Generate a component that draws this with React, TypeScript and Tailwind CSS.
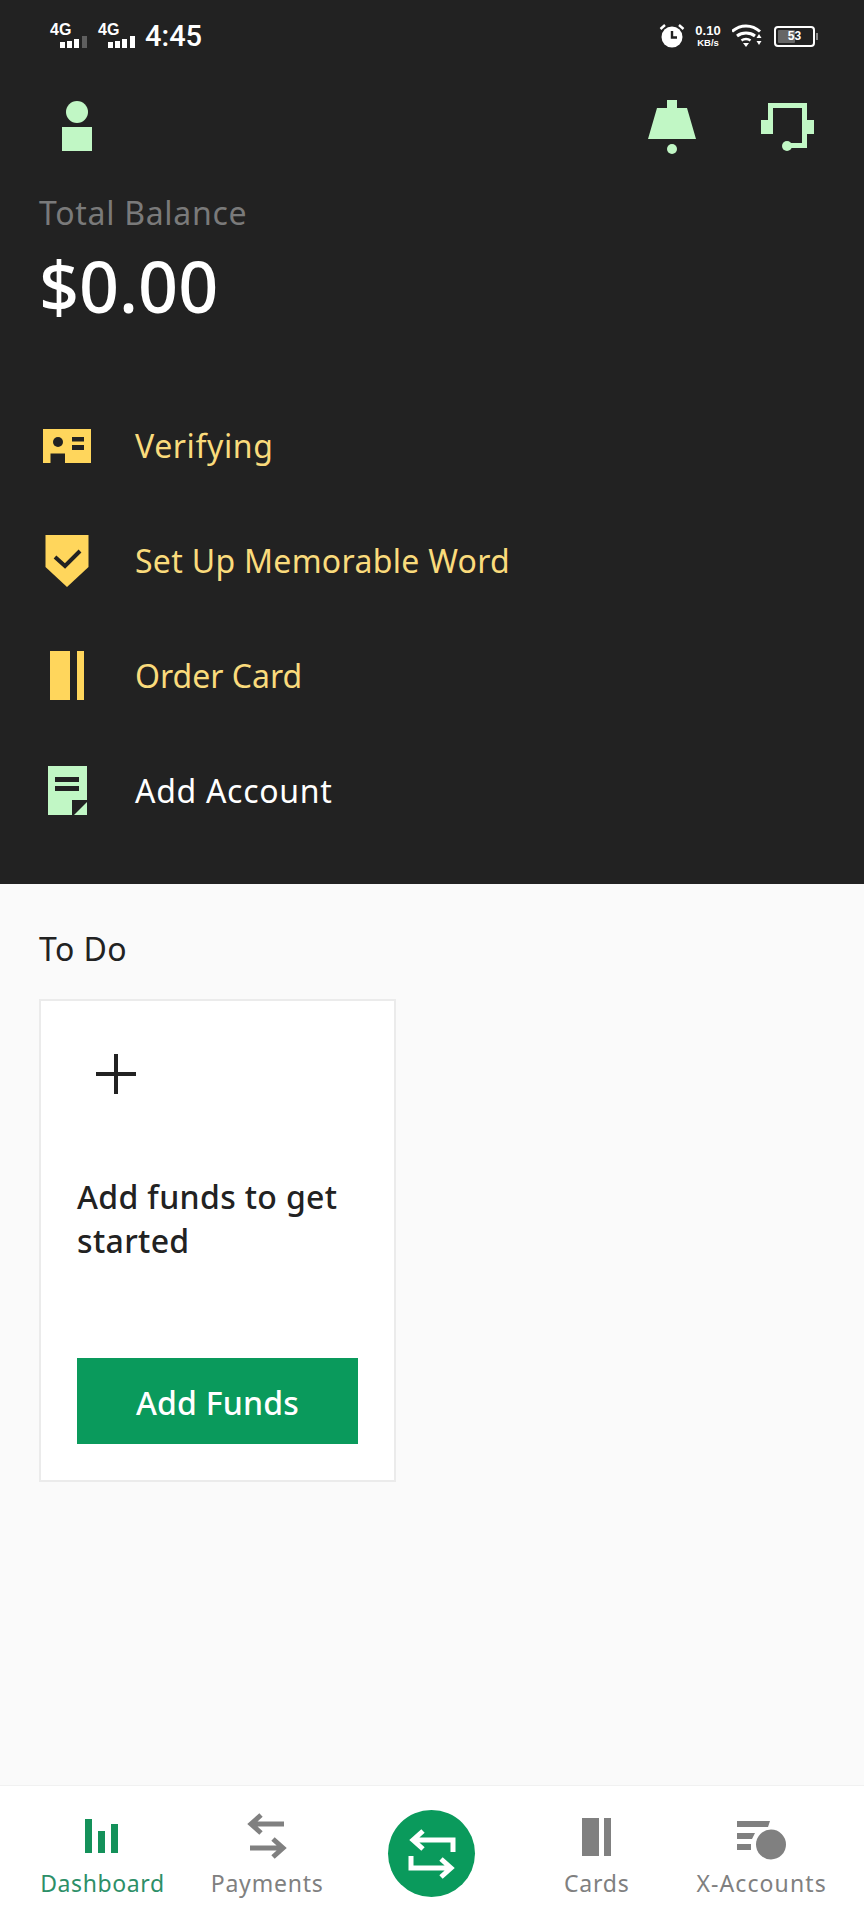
import React from 'react';

const font = { fontFamily: '"Noto Sans", "Open Sans", sans-serif' };

const SignalIcon = ({ full }: { full?: boolean }) => (
  <div className="relative h-[28px] w-[38px]">
    <span className="absolute left-0 top-[-1px] text-[16px] font-bold leading-[18px] text-white [font-family:'Liberation_Sans',sans-serif]">4G</span>
    <svg width="38" height="28" viewBox="0 0 38 28" className="absolute left-0 top-0">
      <rect x="10" y="20" width="5" height="6" fill="#fff" />
      <rect x="17" y="19" width="5" height="7" fill="#fff" />
      <rect x="24" y="17" width="5" height="9" fill="#fff" />
      <rect x="32" y="14" width="5" height="12" fill={full ? '#fff' : '#5f5f5f'} />
    </svg>
  </div>
);

const StatusBar = () => (
  <div className="flex h-[72px] items-center justify-between pl-[50px] pr-[49px] text-white [font-family:'Liberation_Sans',sans-serif]">
    <div className="flex items-center">
      <SignalIcon />
      <div className="ml-[10px]"><SignalIcon full /></div>
      <span className="ml-[9px] text-[29px] font-medium leading-[32px] [font-family:Roboto,sans-serif]">4:45</span>
    </div>
    <div className="flex items-center">
      <svg width="26" height="26" viewBox="0 0 26 26">
        <circle cx="13" cy="14" r="10.5" fill="#fff" />
        <path d="M13 8v6.5h5" fill="none" stroke="#222" strokeWidth="2.4" />
        <path d="M1.5 6 6 2M24.5 6 20 2" stroke="#fff" strokeWidth="2.4" />
      </svg>
      <div className="ml-[8px] flex w-[30px] flex-col items-center font-bold">
        <span className="text-[13px] leading-[13px]">0.10</span>
        <span className="text-[9.5px] leading-[11px]">KB/s</span>
      </div>
      <svg width="32" height="24" viewBox="0 0 32 24" className="ml-[9px]">
        <path d="M0 7.500C8 0 20 0 28 7.500" fill="none" stroke="#fff" strokeWidth="3" />
        <path d="M5 12C10 8 18 8 23 12" fill="none" stroke="#fff" strokeWidth="3" />
        <path d="M9.500 16.500C12 14.500 16 14.500 18.500 16.500" fill="none" stroke="#fff" strokeWidth="2.500" />
        <path d="M14 23l-3-4h6z" fill="#fff" />
        <path d="M27 10l-2.500 4h5zM27 21l-2.500-4h5z" fill="#fff" />
      </svg>
      <div className="relative ml-[10px] flex h-[21px] w-[41px] items-center rounded-[4px] border-2 border-white p-[2px]">
        <div className="h-full w-[53%] rounded-[1px] bg-[#666]" />
        <span className="absolute inset-0 flex items-center justify-center text-[12px] font-bold leading-none">53</span>
        <div className="absolute right-[-5px] top-[5px] h-[7px] w-[2px] bg-[#888]" />
      </div>
    </div>
  </div>
);

const PersonIcon = () => (
  <svg width="30" height="52" viewBox="0 0 30 52">
    <circle cx="15" cy="12" r="11" fill="#c1f7c5" />
    <rect x="0" y="27" width="30" height="24" fill="#c1f7c5" />
  </svg>
);

const BellIcon = () => (
  <svg width="48" height="55" viewBox="0 0 48 55">
    <path d="M19 0h10v8h10l9 31H0L9 8h10z" fill="#c1f7c5" />
    <circle cx="24" cy="49" r="5" fill="#c1f7c5" />
  </svg>
);

const HeadsetIcon = () => (
  <svg width="54" height="55" viewBox="0 0 54 55">
    <path d="M7 3h39v45H26v-5h15V8H12v26H7z" fill="#c1f7c5" />
    <rect x="0" y="20" width="12" height="14" fill="#c1f7c5" />
    <rect x="41" y="20" width="12" height="14" fill="#c1f7c5" />
    <circle cx="26" cy="46" r="5" fill="#c1f7c5" />
  </svg>
);

const IdIcon = () => (
  <svg width="50" height="62" viewBox="0 0 50 62">
    <path d="M1 14h48v34H1z" fill="#ffd65c" />
    <circle cx="16" cy="27" r="5" fill="#222" />
    <rect x="8.500" y="38.500" width="14.500" height="9.500" fill="#222" />
    <rect x="30" y="22" width="12" height="4.500" fill="#222" />
    <rect x="30" y="30" width="12" height="5" fill="#222" />
  </svg>
);

const ShieldIcon = () => (
  <svg width="50" height="62" viewBox="0 0 50 62">
    <path d="M3.500 5h43v32L25 57 3.500 37z" fill="#ffd65c" />
    <path d="M13 27l10 9 15-15" fill="none" stroke="#222" strokeWidth="4" />
  </svg>
);

const CardIcon = () => (
  <svg width="50" height="62" viewBox="0 0 50 62">
    <rect x="8" y="6" width="20" height="49" fill="#ffd65c" />
    <rect x="35" y="6" width="7" height="49" fill="#ffd65c" />
  </svg>
);

const NoteIcon = () => (
  <svg width="50" height="62" viewBox="0 0 50 62">
    <path d="M6 6h39v49H6z" fill="#c1f7c5" />
    <rect x="13" y="17" width="24" height="5" fill="#222" />
    <rect x="13" y="26" width="24" height="5" fill="#222" />
    <path d="M30 40h15v15H30z" fill="#222" />
    <path d="M45 42v13H32z" fill="#c1f7c5" />
  </svg>
);

const menu = [
  { label: 'Verifying', icon: <IdIcon />, text: 'text-[#fadb7c] tracking-[0.6px]' },
  { label: 'Set Up Memorable Word', icon: <ShieldIcon />, text: 'text-[#fadb7c] tracking-[0.3px]' },
  { label: 'Order Card', icon: <CardIcon />, text: 'text-[#fadb7c] tracking-[0px]' },
  { label: 'Add Account', icon: <NoteIcon />, text: 'text-white tracking-[0.7px]' },
];

const NavLabel = ({ children, className }: { children: React.ReactNode; className: string }) => (
  <span className={`mt-[10px] text-[23px] leading-[30px] ${className}`}>{children}</span>
);

const BottomNav = () => (
  <nav className="grid h-[135px] grid-cols-5 items-start border-t border-[#f1f1f1] bg-white px-[20px]">
    <div className="flex flex-col items-center pt-[30px]">
      <svg width="60" height="42" viewBox="0 0 60 42">
        <rect x="13" y="3" width="7" height="34" fill="#14915a" />
        <rect x="26" y="15" width="7" height="22" fill="#14915a" />
        <rect x="39" y="8" width="7" height="29" fill="#14915a" />
      </svg>
      <NavLabel className="tracking-[0.6px] text-[#2d8f68]">Dashboard</NavLabel>
    </div>
    <div className="flex flex-col items-center pt-[30px]">
      <svg width="60" height="42" viewBox="0 0 60 42" fill="none" stroke="#808080" strokeWidth="5" className="overflow-visible">
        <path d="M47 8H14M24 -1 14 8 24 17" />
        <path d="M13 32h33M36 23l10 9-10 9" />
      </svg>
      <NavLabel className="tracking-[0.8px] text-[#808080]">Payments</NavLabel>
    </div>
    <div className="flex justify-center pt-[24px]">
      <div className="flex h-[87px] w-[87px] items-center justify-center rounded-full bg-[#0a9a5c]">
        <svg width="50" height="44" viewBox="0 0 50 44" fill="none" stroke="#fff" strokeWidth="5" className="overflow-visible">
          <path d="M46 20V8H6M16 -1 6 8 16 17" />
          <path d="M4 24v12h40M34 27l10 9-10 9" />
        </svg>
      </div>
    </div>
    <div className="flex flex-col items-center pt-[30px]">
      <svg width="60" height="42" viewBox="0 0 60 42">
        <rect x="15" y="2" width="17" height="38" fill="#808080" />
        <rect x="37" y="2" width="7" height="38" fill="#808080" />
      </svg>
      <NavLabel className="tracking-[0.8px] text-[#808080]">Cards</NavLabel>
    </div>
    <div className="flex flex-col items-center pt-[30px]">
      <svg width="60" height="42" viewBox="0 0 60 42" className="overflow-visible">
        <path d="M5 5h33l-2 6H5zM5 17h18l-3 6H5zM5 28h14v6H5z" fill="#808080" />
        <circle cx="39" cy="28.500" r="15" fill="#808080" />
      </svg>
      <NavLabel className="tracking-[1.1px] text-[#808080]">X-Accounts</NavLabel>
    </div>
  </nav>
);

export default function App() {
  return (
    <div className="flex h-[1920px] w-[864px] flex-col overflow-hidden bg-[#fafafa]" style={font}>
      <header className="bg-[#222222] pb-[36px]">
        <StatusBar />
        <div className="mt-[28px] flex items-start justify-between pl-[62px] pr-[49px]">
          <PersonIcon />
          <div className="flex items-start gap-[65px]">
            <BellIcon />
            <HeadsetIcon />
          </div>
        </div>
        <div className="px-[39px]">
          <p className="mt-[38px] text-[32px] leading-[40px] tracking-[0.7px] text-[#7a7a7a]">Total Balance</p>
          <p className="mt-[13px] text-[70px] font-medium leading-[80px] text-white">$0.00</p>
        </div>
        <ul className="mt-[62px] px-[42px]">
          {menu.map(item => (
            <li key={item.label} className="flex h-[115px] items-center gap-[43px]">
              {item.icon}
              <span className={`text-[32px] leading-[40px] ${item.text}`}>{item.label}</span>
            </li>
          ))}
        </ul>
      </header>

      <main className="flex-1 px-[39px] pt-[45px]">
        <h2 className="text-[32px] leading-[40px] tracking-[0.4px] text-[#222222]">To Do</h2>
        <div className="mt-[30px] flex h-[483px] w-[357px] flex-col border-2 border-[#ebebeb] bg-white px-[36px] pb-[36px] pt-[52px]">
          <svg width="42" height="42" viewBox="0 0 42 42" className="ml-[18px] shrink-0">
            <path d="M21 1v40M1 21h40" fill="none" stroke="#222" strokeWidth="4" />
          </svg>
          <p className="mt-[80px] text-[32px] font-medium leading-[44px] tracking-[0.35px] text-[#222222]">Add funds to get started</p>
          <button className="mt-auto h-[86px] w-full bg-[#0a9a5c] pt-[4px] text-[32px] font-medium tracking-[0.2px] text-white">Add Funds</button>
        </div>
      </main>

      <BottomNav />
    </div>
  );
}
